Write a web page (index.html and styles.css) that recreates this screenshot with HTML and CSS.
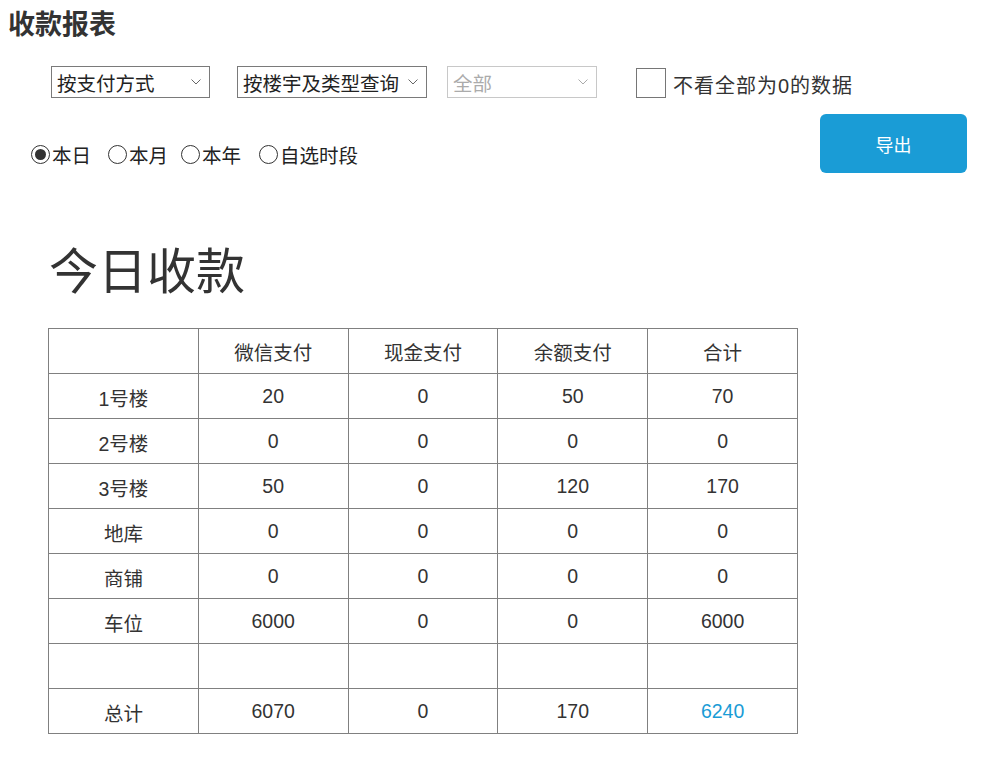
FILE: index.html
```html
<!DOCTYPE html>
<html lang="zh-CN">
<head>
<meta charset="utf-8">
<title>收款报表</title>
<link rel="stylesheet" href="styles.css">
</head>
<body>
<div class="page">
  <h1 class="title">收款报表</h1>

  <div class="filters">
    <label class="select select-a">
      <select><option>按支付方式</option></select>
      <svg class="chev" width="10" height="6" viewBox="0 0 10 6"><path d="M0.5 0.5 L5 5 L9.5 0.5" fill="none" stroke="#666" stroke-width="1"/></svg>
    </label>
    <label class="select select-b">
      <select><option>按楼宇及类型查询</option></select>
      <svg class="chev" width="10" height="6" viewBox="0 0 10 6"><path d="M0.5 0.5 L5 5 L9.5 0.5" fill="none" stroke="#666" stroke-width="1"/></svg>
    </label>
    <label class="select select-c disabled">
      <select disabled><option>全部</option></select>
      <svg class="chev" width="10" height="6" viewBox="0 0 10 6"><path d="M0.5 0.5 L5 5 L9.5 0.5" fill="none" stroke="#aaa" stroke-width="1"/></svg>
    </label>
    <label class="check">
      <span class="box"></span>
      <span class="check-text">不看全部为0的数据</span>
    </label>
  </div>

  <div class="row2">
    <div class="radios">
      <label class="radio"><span class="dot on"></span>本日</label>
      <label class="radio"><span class="dot"></span>本月</label>
      <label class="radio"><span class="dot"></span>本年</label>
      <label class="radio"><span class="dot"></span>自选时段</label>
    </div>
    <button class="export">导出</button>
  </div>

  <div class="report">
    <h2 class="report-title">今日收款</h2>
    <table class="grid">
      <thead>
        <tr><th></th><th>微信支付</th><th>现金支付</th><th>余额支付</th><th>合计</th></tr>
      </thead>
      <tbody>
        <tr><td>1号楼</td><td>20</td><td>0</td><td>50</td><td>70</td></tr>
        <tr><td>2号楼</td><td>0</td><td>0</td><td>0</td><td>0</td></tr>
        <tr><td>3号楼</td><td>50</td><td>0</td><td>120</td><td>170</td></tr>
        <tr><td>地库</td><td>0</td><td>0</td><td>0</td><td>0</td></tr>
        <tr><td>商铺</td><td>0</td><td>0</td><td>0</td><td>0</td></tr>
        <tr><td>车位</td><td>6000</td><td>0</td><td>0</td><td>6000</td></tr>
        <tr><td></td><td></td><td></td><td></td><td></td></tr>
        <tr class="total"><td>总计</td><td>6070</td><td>0</td><td>170</td><td class="sum">6240</td></tr>
      </tbody>
    </table>
  </div>
</div>
</body>
</html>
```

FILE: styles.css
```css
* { box-sizing: border-box; }

body {
  margin: 0;
  background: #fff;
  color: #333;
  font-family: "Liberation Sans", "Noto Sans CJK SC", sans-serif;
}

.page {
  padding: 8px 17px 0 8px;
}

.title {
  margin: 0;
  font-size: 27px;
  line-height: 30px;
  font-weight: bold;
  color: #333;
  font-family: "Noto Sans CJK SC", sans-serif;
}

.filters {
  display: flex;
  align-items: center;
  margin-top: 28px;
  padding-left: 43px;
  height: 32px;
}

.select {
  position: relative;
  display: block;
  height: 32px;
  border: 1px solid #7a7a7a;
  background: #fff;
}

.select select {
  appearance: none;
  -webkit-appearance: none;
  border: 0;
  background: transparent;
  width: 100%;
  height: 100%;
  padding: 0 0 0 5px;
  font-family: "Noto Sans CJK SC", sans-serif;
  font-size: 19.5px;
  color: #222;
  outline: none;
}

.select .chev {
  position: absolute;
  right: 8px;
  top: 12px;
}

.select-a { width: 159px; }
.select-b { width: 190px; margin-left: 27px; }
.select-c { width: 150px; margin-left: 20px; border-color: #c8c8c8; }
.select-c select { color: #888; }

.check {
  display: flex;
  align-items: center;
  margin-left: 39px;
  margin-top: 2px;
}

.box {
  width: 30px;
  height: 30px;
  border: 1px solid #767676;
  background: #fff;
}

.check-text {
  margin-left: 7px;
  margin-top: 2px;
  font-size: 20px;
  letter-spacing: 1px;
  color: #333;
}

.row2 {
  display: flex;
  justify-content: space-between;
  align-items: flex-start;
  margin-top: 16px;
}

.radios {
  display: flex;
  margin-top: 29px;
  padding-left: 23px;
}

.radio {
  display: flex;
  align-items: center;
  font-family: "Noto Sans CJK SC", sans-serif;
  font-size: 19.5px;
  line-height: 24px;
  color: #222;
  margin-right: 17px;
}

.radio:nth-child(2) { margin-right: 13px; }
.radio:nth-child(3) { margin-right: 18px; }

.dot {
  position: relative;
  width: 19px;
  height: 19px;
  border: 1px solid #333;
  border-radius: 50%;
  margin-right: 2px;
  margin-top: -2px;
}

.dot.on::after {
  content: "";
  position: absolute;
  left: 3px;
  top: 3px;
  width: 11px;
  height: 11px;
  border-radius: 50%;
  background: #333;
}

.export {
  width: 147px;
  height: 59px;
  border: 0;
  border-radius: 6px;
  background: #1a9cd6;
  color: #fff;
  font-family: "Noto Sans CJK SC", sans-serif;
  font-size: 18px;
  cursor: pointer;
}

.report {
  margin-left: 40px;
  margin-top: 64px;
}

.report-title {
  margin: 0 0 0 1px;
  font-family: "Noto Sans CJK SC", sans-serif;
  font-size: 49px;
  font-weight: normal;
  line-height: 62px;
  color: #333;
}

.grid {
  margin-top: 29px;
  width: 750px;
  border-collapse: collapse;
  table-layout: fixed;
  border: 1px solid #808080;
}

.grid th,
.grid td {
  border: 1px solid #808080;
  height: 45px;
  padding: 0;
  text-align: center;
  vertical-align: middle;
  font-size: 19.5px;
  font-weight: normal;
  color: #333;
}

.grid tbody td:first-child { padding-top: 2px; }

.grid .sum { color: #1a9cd6; }
```
